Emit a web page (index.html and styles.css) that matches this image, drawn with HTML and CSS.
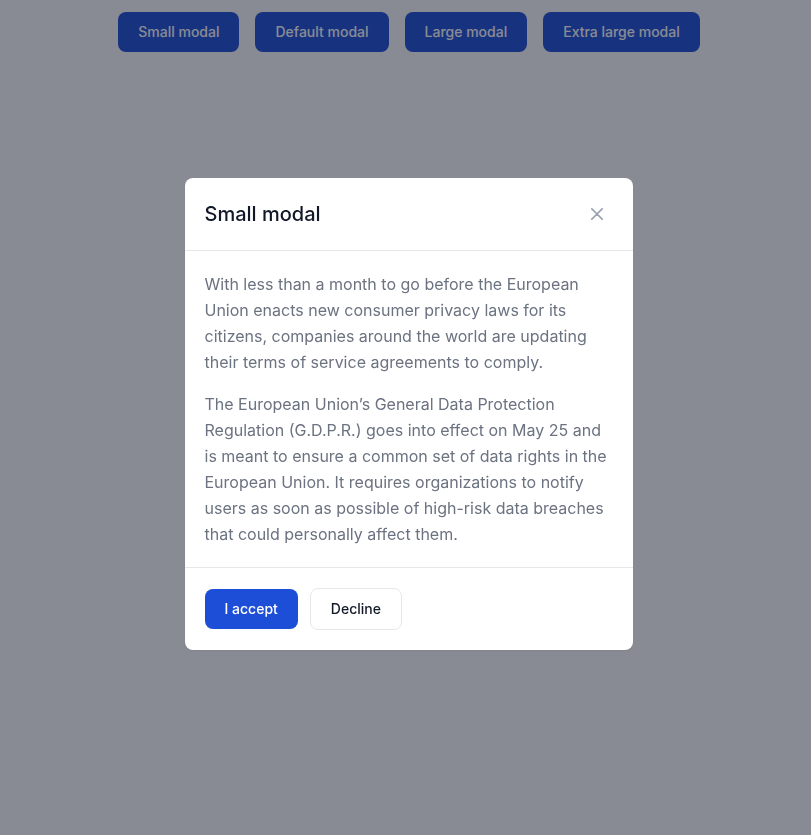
FILE: index.html
```html
<!DOCTYPE html>
<html lang="en">
<head>
<meta charset="utf-8">
<title>Modal sizes</title>
<link rel="stylesheet" href="styles.css">
</head>
<body>
<div class="toolbar">
  <button class="btn btn-primary" type="button">Small modal</button>
  <button class="btn btn-primary" type="button">Default modal</button>
  <button class="btn btn-primary" type="button">Large modal</button>
  <button class="btn btn-primary" type="button">Extra large modal</button>
</div>

<div class="backdrop"></div>

<div class="modal-wrap">
  <div class="modal">
    <div class="modal-header">
      <h3 class="modal-title">Small modal</h3>
      <button class="close" type="button" aria-label="Close modal">
        <svg width="12" height="12" viewBox="0 0 14 14" fill="none" aria-hidden="true">
          <path d="m1 1 6 6m0 0 6 6M7 7l6-6M7 7l-6 6" stroke="currentColor" stroke-linecap="round" stroke-linejoin="round" stroke-width="2"/>
        </svg>
      </button>
    </div>
    <div class="modal-body">
      <p>With less than a month to go before the European Union enacts new consumer privacy laws for its citizens, companies around the world are updating their terms of service agreements to comply.</p>
      <p>The European Union’s General Data Protection Regulation (G.D.P.R.) goes into effect on May 25 and is meant to ensure a common set of data rights in the European Union. It requires organizations to notify users as soon as possible of high-risk data breaches that could personally affect them.</p>
    </div>
    <div class="modal-footer">
      <button class="btn btn-primary" type="button">I accept</button>
      <button class="btn btn-outline" type="button">Decline</button>
    </div>
  </div>
</div>
</body>
</html>
```

FILE: styles.css
```css
* { box-sizing: border-box; }

html, body {
  margin: 0;
  padding: 0;
  height: 100%;
}

body {
  font-family: Inter, "Noto Sans", sans-serif;
  background: #ffffff;
  color: #111827;
}

.toolbar {
  display: flex;
  justify-content: center;
  gap: 16px;
  padding: 12px 0 0 7px;
}

.btn {
  font-family: inherit;
  font-size: 14px;
  line-height: 20px;
  font-weight: 500;
  padding: 10px 20px;
  border-radius: 8px;
  border: 0;
  cursor: pointer;
}

.btn-primary {
  background: #1d4ed8;
  color: #ffffff;
}

.btn-outline {
  background: #ffffff;
  color: #111827;
  border: 1px solid #e5e7eb;
}

.backdrop {
  position: fixed;
  inset: 0;
  background: rgba(17, 24, 39, 0.5);
}

.modal-wrap {
  position: fixed;
  inset: 0;
  display: flex;
  align-items: center;
  justify-content: center;
  padding: 0 0 8px 6px;
}

.modal {
  width: 448px;
  background: #ffffff;
  border-radius: 8px;
  box-shadow: 0 1px 2px rgba(0, 0, 0, 0.05);
}

.modal-header {
  display: flex;
  align-items: center;
  justify-content: space-between;
  padding: 20px;
  border-bottom: 1px solid #e5e7eb;
}

.modal-title {
  margin: 0;
  font-size: 20px;
  line-height: 28px;
  font-weight: 500;
  color: #111827;
}

.close {
  width: 32px;
  height: 32px;
  display: flex;
  align-items: center;
  justify-content: center;
  background: transparent;
  border: 0;
  border-radius: 8px;
  color: #9ca3af;
  padding: 0;
}

.modal-body {
  padding: 20px;
  display: flex;
  flex-direction: column;
  gap: 16px;
}

.modal-body p {
  margin: 0;
  font-size: 16px;
  line-height: 26px;
  color: #6b7280;
}

.modal-footer {
  display: flex;
  align-items: center;
  gap: 12px;
  padding: 20px;
  border-top: 1px solid #e5e7eb;
}
```
